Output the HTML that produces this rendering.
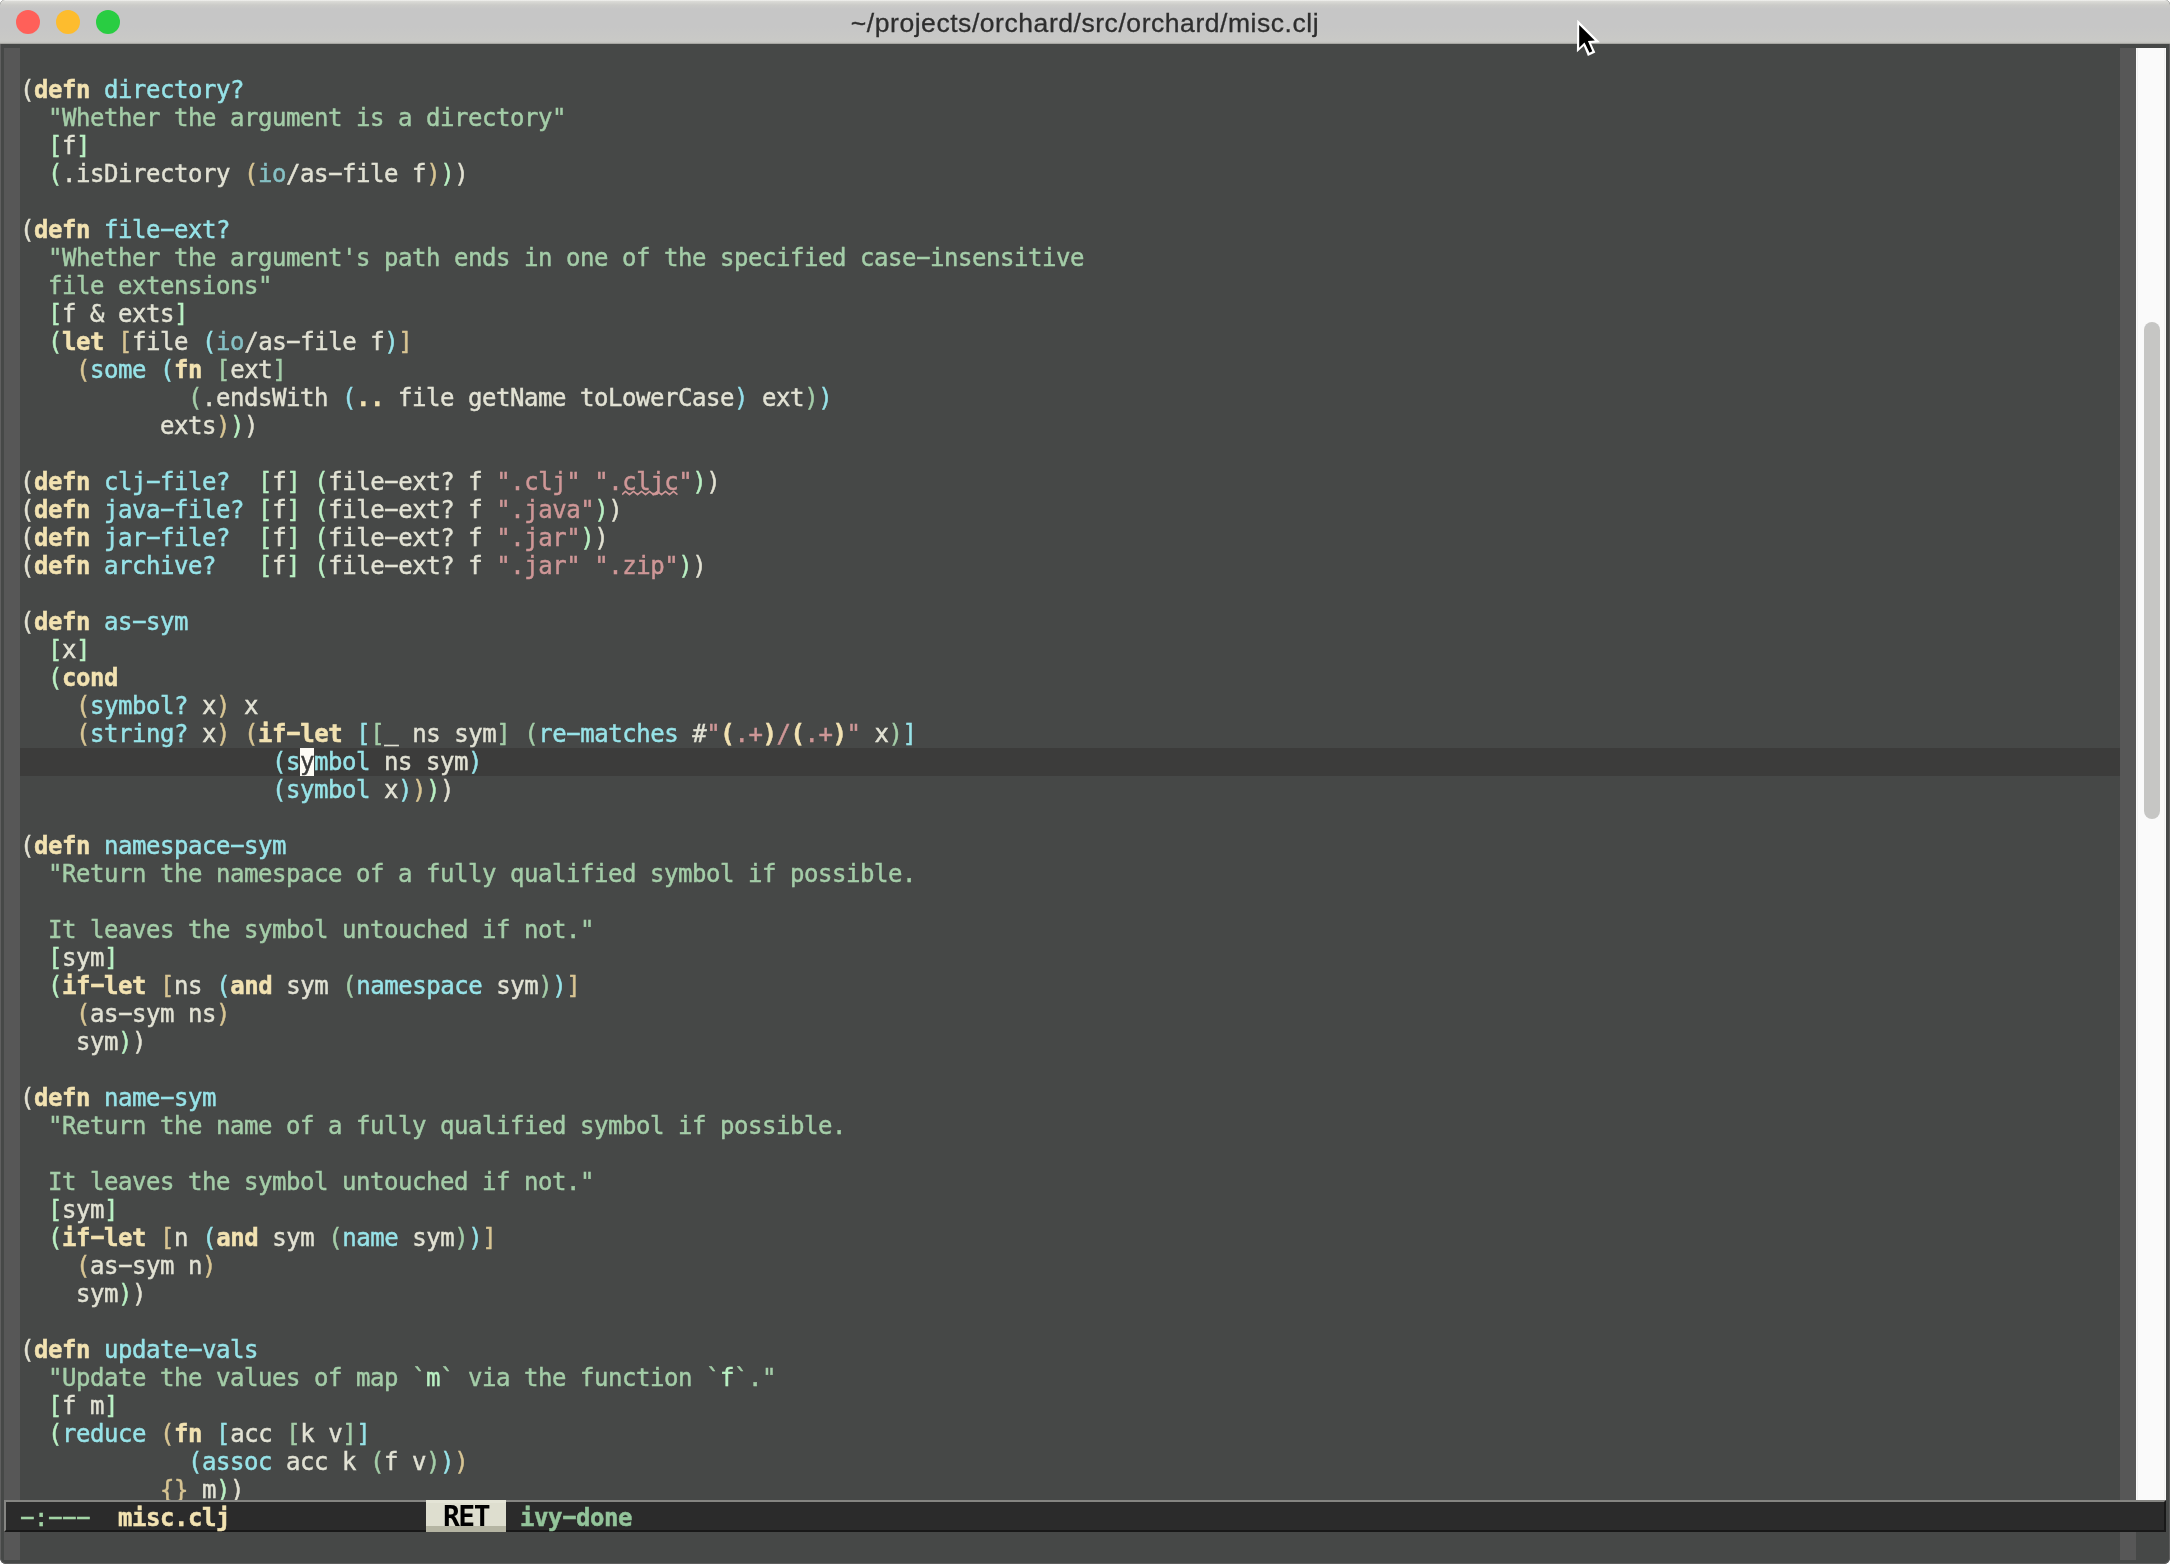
<!DOCTYPE html>
<html><head><meta charset="utf-8"><title>~/projects/orchard/src/orchard/misc.clj</title>
<style>
html,body{margin:0;padding:0;background:#fff;}
body{width:2170px;height:1564px;overflow:hidden;position:relative;}
#win{will-change:transform;position:absolute;left:0;top:0;width:2170px;height:1564px;border-radius:5px 5px 6px 6px;overflow:hidden;background:#464847;box-shadow:inset 0 0 0 1px #5f5f5f;}
#tb{position:absolute;left:0;top:0;width:2170px;height:44px;background:linear-gradient(#f4f4f2 0px,#dadad6 1.5px,#cbcbc8 5px,#c6c6c6 9px,#c6c6c6 26px,#c9c9c6 41px,#c0c0bc 43px,#8e8e8a 44px);}
#tb .dot{position:absolute;top:10px;width:24px;height:24px;border-radius:50%;}
#title{position:absolute;left:0;top:0;width:2170px;height:44px;line-height:47px;-webkit-text-stroke:0.3px;text-align:center;font-family:"Liberation Sans",sans-serif;font-size:26.5px;color:#2e2e2e;letter-spacing:0.55px;}
#buf{-webkit-text-stroke:0.45px;position:absolute;left:20px;top:48px;width:2100px;height:1452px;overflow:hidden;font-family:"DejaVu Sans Mono","Liberation Mono",monospace;font-size:24px;letter-spacing:-0.449px;color:#e2e2d4;}
.ln{height:28px;line-height:28px;white-space:pre;}
.hl{background:#3c3c3b;}
.fr{position:absolute;top:48px;width:16px;height:1512px;background:#575757;}
#sb{position:absolute;left:2136px;top:48px;width:30px;height:1452px;background:#fafafa;box-shadow:inset 1px 0 0 #fafafa;}
#sb:before,#sb:after{content:"";position:absolute;top:0;width:1px;height:100%;background:#f0f0f0;}
#sb:before{left:1px}#sb:after{left:28px}
#th{position:absolute;left:2144px;top:322px;width:16px;height:497px;border-radius:8px;background:#c6c6c4;}
#ml{position:absolute;left:4px;top:1500px;width:2162px;height:32px;background:#2b2b2b;box-sizing:border-box;border-top:2px solid #858582;border-left:2px solid #858582;border-bottom:2px solid #191919;border-right:2px solid #191919;font-family:"DejaVu Sans Mono","Liberation Mono",monospace;font-size:24px;letter-spacing:-0.449px;color:#a3d4a6;white-space:pre;}
#mlt{-webkit-text-stroke:0.45px;position:absolute;left:14px;top:2px;height:28px;line-height:28px;}
#key{position:absolute;left:426px;top:1500px;width:80px;height:32px;background:#dedecf;box-sizing:border-box;border-top:3px solid #e4e4d6;border-bottom:6px solid #b5b5a3;font-family:"DejaVu Sans Mono","Liberation Mono",monospace;font-weight:bold;color:#000;text-align:center;font-size:28px;line-height:28px;letter-spacing:-1.5px;}
#cmd{-webkit-text-stroke:0.45px;position:absolute;left:520px;top:1504px;height:28px;line-height:28px;font-family:"DejaVu Sans Mono","Liberation Mono",monospace;font-size:24px;letter-spacing:-0.449px;font-weight:bold;color:#93c49a;white-space:pre;}
i{font-style:normal;display:inline-block;transform:translateY(-1.3px) scaleX(1.95);}
.k i,#cmd i{transform:translateY(-1.3px) scale(1.62,0.9);}
u{text-decoration:none;position:relative;top:-2px}
.k{color:#f2e2b1;font-weight:bold}
.f{color:#97e3e8}
.b{color:#97e3e8}
.d{color:#a4cda8}
.s{color:#cf9797}
.t{color:#86c1c5}
.c{color:#b9f0c3}
.p1{color:#e2e1d2}.p2{color:#b9f0c3}.p3{color:#d8c593}.p4{color:#97e3e8}.p5{color:#a4cda8}.p6{color:#95dfea}
.cur{background:#fdfbf5;color:#3a3a3a}
.mb{color:#f2e2b1;font-weight:bold}
</style></head><body>
<div id="win">
<div id="tb">
<div class="dot" style="left:16px;background:#ff6059"></div>
<div class="dot" style="left:56px;background:#fdbc2e"></div>
<div class="dot" style="left:96px;background:#29cd42"></div>
<div id="title">~/projects/orchard/src/orchard/misc.clj</div>
</div>
<div class="fr" style="left:4px"></div>
<div class="fr" style="left:2120px"></div>
<div id="buf">
<div class="ln"></div>
<div class="ln"><span class="p1">(</span><span class="k">defn</span> <span class="f">directory?</span></div>
<div class="ln">  <span class="d">"Whether the argument is a directory"</span></div>
<div class="ln">  <span class="p2">[</span>f<span class="p2">]</span></div>
<div class="ln">  <span class="p2">(</span>.isDirectory <span class="p3">(</span><span class="t">io</span>/as<i>-</i>file f<span class="p3">)</span><span class="p2">)</span><span class="p1">)</span></div>
<div class="ln"></div>
<div class="ln"><span class="p1">(</span><span class="k">defn</span> <span class="f">file<i>-</i>ext?</span></div>
<div class="ln">  <span class="d">"Whether the argument's path ends in one of the specified case<i>-</i>insensitive</span></div>
<div class="ln"><span class="d">  file extensions"</span></div>
<div class="ln">  <span class="p2">[</span>f &amp; exts<span class="p2">]</span></div>
<div class="ln">  <span class="p2">(</span><span class="k">let</span> <span class="p3">[</span>file <span class="p4">(</span><span class="t">io</span>/as<i>-</i>file f<span class="p4">)</span><span class="p3">]</span></div>
<div class="ln">    <span class="p3">(</span><span class="b">some</span> <span class="p4">(</span><span class="k">fn</span> <span class="p5">[</span>ext<span class="p5">]</span></div>
<div class="ln">            <span class="p5">(</span>.endsWith <span class="p6">(</span><span class="k">..</span> file getName toLowerCase<span class="p6">)</span> ext<span class="p5">)</span><span class="p4">)</span></div>
<div class="ln">          exts<span class="p3">)</span><span class="p2">)</span><span class="p1">)</span></div>
<div class="ln"></div>
<div class="ln"><span class="p1">(</span><span class="k">defn</span> <span class="f">clj<i>-</i>file?</span>  <span class="p2">[</span>f<span class="p2">]</span> <span class="p2">(</span>file<i>-</i>ext? f <span class="s">".clj"</span> <span class="s">".</span><span class="s w">cljc</span><span class="s">"</span><span class="p2">)</span><span class="p1">)</span></div>
<div class="ln"><span class="p1">(</span><span class="k">defn</span> <span class="f">java<i>-</i>file?</span> <span class="p2">[</span>f<span class="p2">]</span> <span class="p2">(</span>file<i>-</i>ext? f <span class="s">".java"</span><span class="p2">)</span><span class="p1">)</span></div>
<div class="ln"><span class="p1">(</span><span class="k">defn</span> <span class="f">jar<i>-</i>file?</span>  <span class="p2">[</span>f<span class="p2">]</span> <span class="p2">(</span>file<i>-</i>ext? f <span class="s">".jar"</span><span class="p2">)</span><span class="p1">)</span></div>
<div class="ln"><span class="p1">(</span><span class="k">defn</span> <span class="f">archive?</span>   <span class="p2">[</span>f<span class="p2">]</span> <span class="p2">(</span>file<i>-</i>ext? f <span class="s">".jar"</span> <span class="s">".zip"</span><span class="p2">)</span><span class="p1">)</span></div>
<div class="ln"></div>
<div class="ln"><span class="p1">(</span><span class="k">defn</span> <span class="f">as<i>-</i>sym</span></div>
<div class="ln">  <span class="p2">[</span>x<span class="p2">]</span></div>
<div class="ln">  <span class="p2">(</span><span class="k">cond</span></div>
<div class="ln">    <span class="p3">(</span><span class="b">symbol?</span> x<span class="p3">)</span> x</div>
<div class="ln">    <span class="p3">(</span><span class="b">string?</span> x<span class="p3">)</span> <span class="p3">(</span><span class="k">if<i>-</i>let</span> <span class="p4">[</span><span class="p5">[</span><u>_</u> ns sym<span class="p5">]</span> <span class="p5">(</span><span class="b">re<i>-</i>matches</span> #<span class="s">"</span><span class="k">(</span><span class="s">.+</span><span class="k">)</span><span class="s">/</span><span class="k">(</span><span class="s">.+</span><span class="k">)</span><span class="s">"</span> x<span class="p5">)</span><span class="p4">]</span></div>
<div class="ln hl">                  <span class="p4">(</span><span class="b">s</span><span class="cur">y</span><span class="b">mbol</span> ns sym<span class="p4">)</span></div>
<div class="ln">                  <span class="p4">(</span><span class="b">symbol</span> x<span class="p4">)</span><span class="p3">)</span><span class="p2">)</span><span class="p1">)</span></div>
<div class="ln"></div>
<div class="ln"><span class="p1">(</span><span class="k">defn</span> <span class="f">namespace<i>-</i>sym</span></div>
<div class="ln">  <span class="d">"Return the namespace of a fully qualified symbol if possible.</span></div>
<div class="ln"></div>
<div class="ln"><span class="d">  It leaves the symbol untouched if not."</span></div>
<div class="ln">  <span class="p2">[</span>sym<span class="p2">]</span></div>
<div class="ln">  <span class="p2">(</span><span class="k">if<i>-</i>let</span> <span class="p3">[</span>ns <span class="p4">(</span><span class="k">and</span> sym <span class="p5">(</span><span class="b">namespace</span> sym<span class="p5">)</span><span class="p4">)</span><span class="p3">]</span></div>
<div class="ln">    <span class="p3">(</span>as<i>-</i>sym ns<span class="p3">)</span></div>
<div class="ln">    sym<span class="p2">)</span><span class="p1">)</span></div>
<div class="ln"></div>
<div class="ln"><span class="p1">(</span><span class="k">defn</span> <span class="f">name<i>-</i>sym</span></div>
<div class="ln">  <span class="d">"Return the name of a fully qualified symbol if possible.</span></div>
<div class="ln"></div>
<div class="ln"><span class="d">  It leaves the symbol untouched if not."</span></div>
<div class="ln">  <span class="p2">[</span>sym<span class="p2">]</span></div>
<div class="ln">  <span class="p2">(</span><span class="k">if<i>-</i>let</span> <span class="p3">[</span>n <span class="p4">(</span><span class="k">and</span> sym <span class="p5">(</span><span class="b">name</span> sym<span class="p5">)</span><span class="p4">)</span><span class="p3">]</span></div>
<div class="ln">    <span class="p3">(</span>as<i>-</i>sym n<span class="p3">)</span></div>
<div class="ln">    sym<span class="p2">)</span><span class="p1">)</span></div>
<div class="ln"></div>
<div class="ln"><span class="p1">(</span><span class="k">defn</span> <span class="f">update<i>-</i>vals</span></div>
<div class="ln">  <span class="d">"Update the values of map `</span><span class="c">m</span><span class="d">` via the function `</span><span class="c">f</span><span class="d">`."</span></div>
<div class="ln">  <span class="p2">[</span>f m<span class="p2">]</span></div>
<div class="ln">  <span class="p2">(</span><span class="b">reduce</span> <span class="p3">(</span><span class="k">fn</span> <span class="p4">[</span>acc <span class="p5">[</span>k v<span class="p5">]</span><span class="p4">]</span></div>
<div class="ln">            <span class="p4">(</span><span class="b">assoc</span> acc k <span class="p5">(</span>f v<span class="p5">)</span><span class="p4">)</span><span class="p3">)</span></div>
<div class="ln">          <span class="p3">{}</span> m<span class="p2">)</span><span class="p1">)</span></div>
<svg style="position:absolute;left:602px;top:442px" width="56" height="6" viewBox="0 0 56 6"><path d="M0 4.6 L3.5 1.4 L7.5 4.6 L11.5 1.4 L15.5 4.6 L19.5 1.4 L23.5 4.6 L27.5 1.4 L31.5 4.6 L35.5 1.4 L39.5 4.6 L43.5 1.4 L47.5 4.6 L51.5 1.4 L55.5 4.6" fill="none" stroke="#cf9797" stroke-width="1.7" stroke-linejoin="round"/></svg>
</div>
<div id="sb"></div><div id="th"></div>
<div id="ml"><span id="mlt"><i>-</i>:<i>-</i><i>-</i><i>-</i>  <span class="mb">misc.clj</span></span></div>
<div id="key">RET</div>
<div id="cmd">ivy<i>-</i>done</div>
<svg style="position:absolute;left:1570px;top:14px" width="40" height="50" viewBox="1570 14 40 50"><path d="M1577.3 19.8 L1576.9 52.3 L1583.8 45.9 L1587.9 56 L1595.3 52.5 L1590.9 43.1 L1599.9 42.2 Z" fill="#fff"/><path d="M1579.2 25.1 L1579.2 47.7 L1584.5 42.6 L1589.5 52.8 L1592.3 51.2 L1587.9 41 L1594.8 40.6 Z" fill="#000"/></svg>
</div>
</body></html>
